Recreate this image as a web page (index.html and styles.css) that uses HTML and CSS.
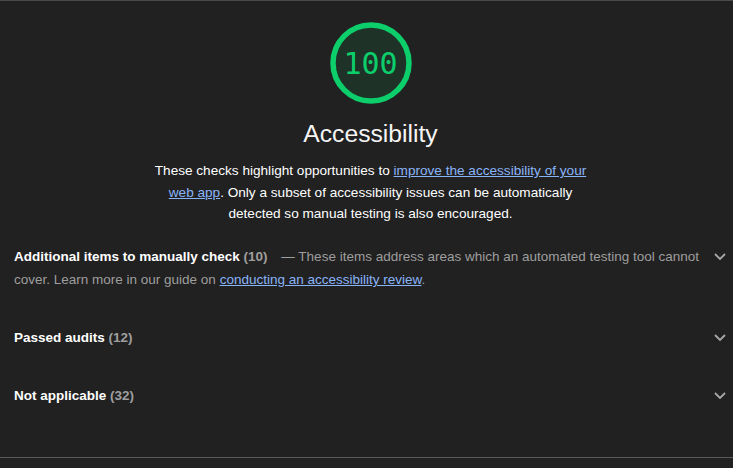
FILE: index.html
```html
<!DOCTYPE html>
<html lang="en">
<head>
<meta charset="utf-8">
<title>Accessibility</title>
<link rel="stylesheet" href="styles.css">
</head>
<body>
<section class="category">
  <header class="cat-header">
    <div class="gauge">
      <svg class="gauge-svg" viewBox="0 0 82 82" width="82" height="82" aria-hidden="true">
        <circle class="gauge-base" cx="41" cy="41" r="38"></circle>
        <circle class="gauge-arc" cx="41" cy="41" r="38"></circle>
      </svg>
      <span class="gauge-value">100</span>
    </div>
    <h2 class="cat-title">Accessibility</h2>
    <p class="cat-desc">These checks highlight opportunities to <a href="#">improve the accessibility of your web app</a>. Only a subset of accessibility issues can be automatically detected so manual testing is also encouraged.</p>
  </header>

  <div class="groups">
    <div class="group">
      <div class="group-text">
        <span class="group-title">Additional items to manually check</span>
        <span class="group-count">(10)</span>
        <span class="group-desc">— These items address areas which an automated testing tool cannot cover. Learn more in our guide on <a href="#">conducting an accessibility review</a>.</span>
      </div>
      <span class="toggle"><svg viewBox="0 0 12 7" width="12" height="7"><polyline points="1,1 6,6 11,1"></polyline></svg></span>
    </div>
    <div class="group">
      <div class="group-text">
        <span class="group-title">Passed audits</span>
        <span class="group-count">(12)</span>
      </div>
      <span class="toggle"><svg viewBox="0 0 12 7" width="12" height="7"><polyline points="1,1 6,6 11,1"></polyline></svg></span>
    </div>
    <div class="group">
      <div class="group-text">
        <span class="group-title">Not applicable</span>
        <span class="group-count">(32)</span>
      </div>
      <span class="toggle"><svg viewBox="0 0 12 7" width="12" height="7"><polyline points="1,1 6,6 11,1"></polyline></svg></span>
    </div>
  </div>
</section>
</body>
</html>
```

FILE: styles.css
```css
html, body {
  margin: 0;
  padding: 0;
  background: #212121;
  color: #ffffff;
  font-family: "Liberation Sans", Arial, sans-serif;
  font-size: 13.5px;
}

.category {
  border-top: 1px solid #4a4a4a;
  border-bottom: 1px solid #5a5a5a;
  padding-bottom: 35.5px;
}

.cat-header {
  display: flex;
  flex-direction: column;
  align-items: center;
  padding-top: 21px;
  padding-left: 8px;
  text-align: center;
}

.gauge {
  position: relative;
  width: 82px;
  height: 82px;
}

.gauge-svg {
  display: block;
}

.gauge-base {
  fill: rgba(12, 206, 107, 0.1);
  stroke: none;
}

.gauge-arc {
  fill: none;
  stroke: #0cce6b;
  stroke-width: 5.5px;
}

.gauge-value {
  position: absolute;
  inset: 0;
  display: flex;
  align-items: center;
  justify-content: center;
  font-family: "DejaVu Sans Mono", monospace;
  font-size: 30px;
  color: #0cce6b;
}

.cat-title {
  margin: 16px 0 0;
  font-size: 24.7px;
  line-height: 28px;
  font-weight: normal;
  color: #f5f5f5;
}

.cat-desc {
  margin: 12px 0 0;
  max-width: 440px;
  font-size: 13.6px;
  line-height: 21.5px;
  color: #ffffff;
}

a {
  color: #8ab4f8;
  text-decoration: underline;
}

.groups {
  display: flex;
  flex-direction: column;
}

.group {
  display: flex;
  align-items: flex-start;
  padding: 20.5px 1px 14.5px 14px;
}

.group-text {
  flex: 1;
  line-height: 23px;
  color: #9e9e9e;
}

.group-title {
  font-weight: bold;
  color: #ffffff;
}

.group-count {
  font-weight: bold;
  color: #9e9e9e;
}

.group-desc {
  margin-left: 10px;
  color: #9e9e9e;
}

.toggle {
  flex: 0 0 24px;
  height: 23px;
  display: flex;
  align-items: center;
  justify-content: center;
}

.toggle polyline {
  fill: none;
  stroke: #a8a8a8;
  stroke-width: 1.8;
}
```
